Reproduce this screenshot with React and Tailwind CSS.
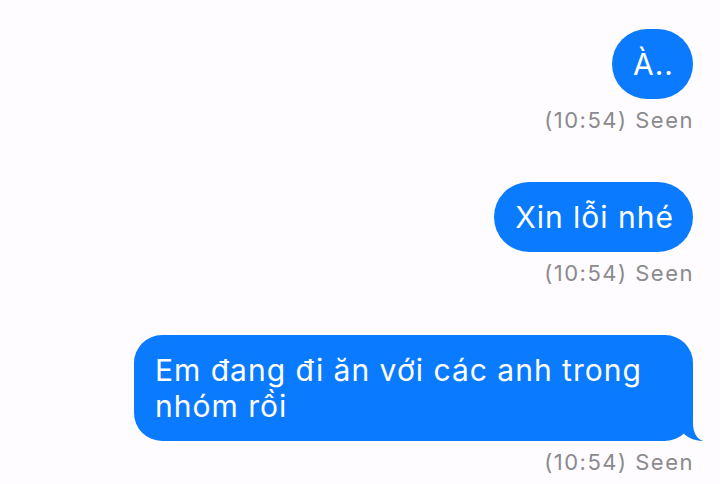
export default function App() {
  var messages = [
    { text: "À..", time: "(10:54) Seen" },
    { text: "Xin lỗi nhé", time: "(10:54) Seen" },
    { text: "Em đang đi ăn với các anh trong nhóm rồi", time: "(10:54) Seen", tail: true },
  ];

  return (
    <div
      className="w-[720px] h-[484px] overflow-hidden bg-[#fefcfe] pt-[29px] pr-[27px] flex flex-col items-end gap-[50px]"
      style={{ fontFamily: "Inter, 'Noto Sans', sans-serif" }}
    >
      {messages.map((m, i) => (
        <div key={i} className="flex flex-col items-end">
          <div
            className={
              "relative bg-[#0a7aff] text-white text-[30px] tracking-[1px] leading-[36px] py-[17px] pl-[21px] pr-[19px] " +
              (m.tail ? "w-[559px] rounded-[28px]" : "rounded-full")
            }
          >
            {m.text}
            {m.tail && (
              <svg
                className="absolute right-[-10px] bottom-0"
                width="20"
                height="30"
                viewBox="0 0 20 30"
              >
                <path d="M10 0 L10 12 C10 22 14 28 20 30 C14 30 7 28 1 23 L1 8 Z" fill="#0a7aff" />
              </svg>
            )}
          </div>
          <div className="mt-[9px] text-[22px] tracking-[1.5px] leading-[24px] text-[#8a8a8f] mr-[-1px]">{m.time}</div>
        </div>
      ))}
    </div>
  );
}
